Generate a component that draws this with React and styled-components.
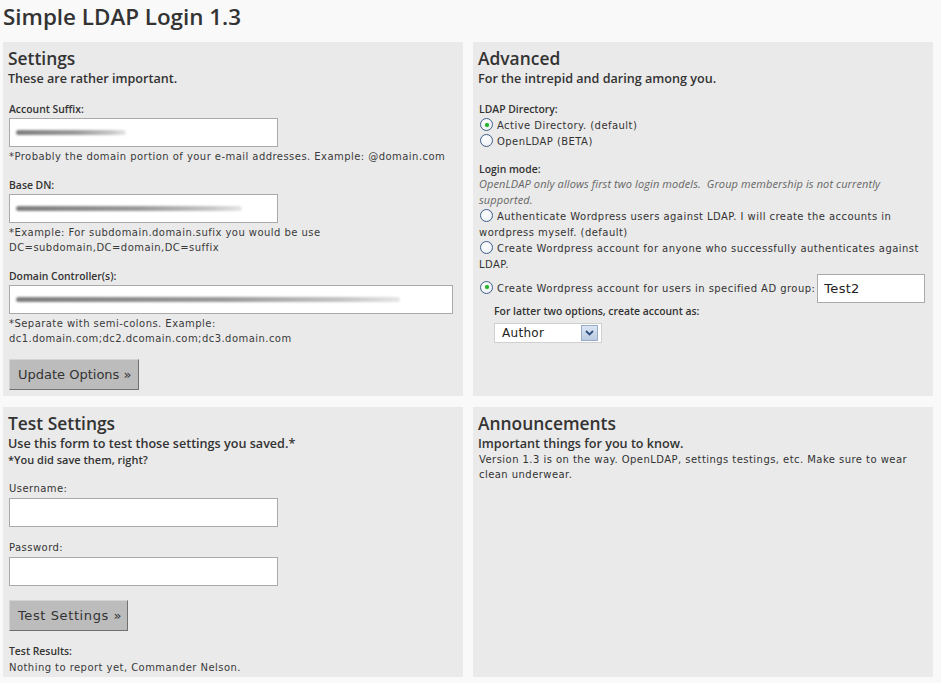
import React from "react";
import styled, { createGlobalStyle } from "styled-components";

const GlobalStyle = createGlobalStyle`
  html, body {
    margin: 0;
    padding: 0;
    background: #f9f9f9;
  }
  body {
    font-family: "Open Sans", "Liberation Sans", sans-serif;
    color: #333;
  }
`;

const Page = styled.div`
  width: 941px;
  height: 683px;
  overflow: hidden;
  background: #f9f9f9;
`;

const Title = styled.h1`
  margin: 0;
  padding-left: 3px;
  font-size: 22.4px;
  font-weight: 600;
  line-height: 33px;
  color: #333;
`;

const Grid = styled.div`
  display: grid;
  grid-template-columns: 460px 460px;
  grid-template-rows: 354px 270px;
  column-gap: 10px;
  row-gap: 11px;
  margin: 9px 0 0 3px;
`;

const Panel = styled.section`
  background: #eaeaea;
  padding: 5px 6px 0 5px;
`;

const Heading = styled.h2`
  margin: 0;
  font-size: 17.4px;
  font-weight: 600;
  line-height: 22px;
  color: #333;
`;

const Lead = styled.p`
  margin: 2px 0 0;
  font-size: 12.6px;
  font-weight: 600;
  line-height: 16px;
  color: #333;
`;

const Note = styled.p`
  margin: 0;
  font-size: 11px;
  font-weight: 600;
  line-height: 16px;
`;

const Label = styled.div`
  margin-top: ${({ gap }) => gap ?? 14}px;
  padding-left: 1px;
  font-size: 10.4px;
  font-weight: 600;
  line-height: 14px;
  color: #333;
`;

// the Verdana-like, widely spaced face used for hints and options
const spaced = `
  font-family: "DejaVu Sans", Verdana, sans-serif;
  font-size: 10px;
  letter-spacing: 0.45px;
`;

const PlainLabel = styled.div`
  ${spaced}
  margin-top: ${({ gap }) => gap ?? 14}px;
  padding-left: 1px;
  line-height: 14px;
  color: #333;
`;

const Box = styled.div`
  box-sizing: border-box;
  margin: 2px 0 0 1px;
  width: ${({ w }) => w || 269}px;
  height: 29px;
  background: #fff;
  border: 1px solid #aaa;
  display: flex;
  align-items: center;
  padding-left: 6px;
`;

const Blur = styled.span`
  display: block;
  height: 5px;
  width: ${({ w }) => w}px;
  border-radius: 3px;
  background: linear-gradient(90deg, #7d7d7d, #9a9a9a 55%, #c4c4c4 85%, #e6e6e6);
  filter: blur(1.2px);
`;

const Hint = styled.p`
  ${spaced}
  margin: 2px 0 0 1px;
  line-height: 15.5px;
  color: #3a3a3a;
`;

const Body = styled.p`
  ${spaced}
  margin: 0 0 0 1px;
  line-height: 15px;
  color: #333;
`;

const Button = styled.button`
  display: block;
  box-sizing: border-box;
  margin: ${({ gap }) => gap}px 0 0 1px;
  width: ${({ w }) => w}px;
  height: 31px;
  padding: 0 0 0 8px;
  text-align: left;
  background: #bcbcbc;
  border: 1px solid;
  border-color: #d4d4d4 #707070 #707070 #d4d4d4;
  font-family: "DejaVu Sans", Verdana, sans-serif;
  font-size: 13px;
  letter-spacing: ${({ ls }) => ls}px;
  color: #333;
  cursor: pointer;
`;

const Choices = styled.div`
  ${spaced}
  margin-top: ${({ gap }) => gap || 0}px;
  padding-left: 1px;
  line-height: 16px;
  color: #333;
`;

const Choice = styled.label`
  display: block;
`;

const Radio = styled.span`
  display: inline-block;
  box-sizing: border-box;
  width: 13px;
  height: 13px;
  margin: 0 4px 0 1px;
  vertical-align: -2px;
  border-radius: 50%;
  border: 1px solid #3f5f86;
  background: radial-gradient(circle at 40% 35%, #fff, #e6ebf2);
  position: relative;
  &::after {
    content: "";
    display: ${({ checked }) => (checked ? "block" : "none")};
    position: absolute;
    left: 3.5px;
    top: 3.5px;
    width: 4px;
    height: 4px;
    border-radius: 50%;
    background: #29b12e;
    box-shadow: 0 0 1px #5fd15f;
  }
`;

const Italic = styled.p`
  margin: 0;
  padding-left: 1px;
  font-size: 11px;
  font-style: italic;
  letter-spacing: 0.1px;
  line-height: 16px;
  color: #666;
`;

const GroupRow = styled.div`
  display: flex;
  align-items: center;
  gap: 2px;
  margin-top: 1px;
`;

const GroupInput = styled.div`
  box-sizing: border-box;
  width: 108px;
  height: 29px;
  background: #fff;
  border: 1px solid #aaa;
  padding-left: 6px;
  display: flex;
  align-items: center;
  font-family: "DejaVu Sans", Verdana, sans-serif;
  font-size: 13px;
  letter-spacing: 0.3px;
  color: #222;
`;

const Indent = styled.div`
  padding-left: 15px;
`;

const Select = styled.div`
  box-sizing: border-box;
  margin: 5px 0 0 1px;
  width: 108px;
  height: 20px;
  background: #fff;
  border: 1px solid #d0d0d0;
  display: flex;
  align-items: center;
  justify-content: space-between;
  padding: 0 3px 0 7px;
  font-family: "DejaVu Sans", Verdana, sans-serif;
  font-size: 12px;
  letter-spacing: 0.3px;
  color: #222;
`;

const Arrow = styled.span`
  box-sizing: border-box;
  width: 17px;
  height: 16px;
  border: 1px solid #98acc8;
  background: linear-gradient(#dbe5f3, #bccbe2);
  display: flex;
  align-items: center;
  justify-content: center;
`;

const Field = ({ label, gap, w, blur, plain }) => {
  const L = plain ? PlainLabel : Label;
  return (
    <>
      <L gap={gap}>{label}</L>
      <Box w={w}>{blur ? <Blur w={blur} /> : null}</Box>
    </>
  );
};

export default function App() {
  return (
    <Page>
      <GlobalStyle />
      <Title>Simple LDAP Login 1.3</Title>
      <Grid>
        <Panel>
          <Heading>Settings</Heading>
          <Lead>These are rather important.</Lead>
          <Field label="Account Suffix:" gap={15} blur={110} />
          <Hint>*Probably the domain portion of your e-mail addresses. Example: @domain.com</Hint>
          <Field label="Base DN:" gap={13} blur={226} />
          <Hint>
            *Example: For subdomain.domain.sufix you would be use
            <br />
            DC=subdomain,DC=domain,DC=suffix
          </Hint>
          <Field label="Domain Controller(s):" gap={13} w={444} blur={384} />
          <Hint>
            *Separate with semi-colons. Example:
            <br />
            dc1.domain.com;dc2.dcomain.com;dc3.domain.com
          </Hint>
          <Button gap={12} w={130} ls={0}>
            Update Options »
          </Button>
        </Panel>

        <Panel>
          <Heading>Advanced</Heading>
          <Lead>For the intrepid and daring among you.</Lead>
          <Label gap={15}>LDAP Directory:</Label>
          <Choices gap={2}>
            <Choice>
              <Radio checked />
              Active Directory. (default)
            </Choice>
            <Choice>
              <Radio />
              OpenLDAP (BETA)
            </Choice>
          </Choices>
          <Label gap={12}>Login mode:</Label>
          <Italic>
            OpenLDAP only allows first two login models.&nbsp; Group membership is not currently
            supported.
          </Italic>
          <Choices gap={1}>
            <Choice>
              <Radio />
              Authenticate Wordpress users against LDAP. I will create the accounts in wordpress
              myself. (default)
            </Choice>
            <Choice>
              <Radio />
              Create Wordpress account for anyone who successfully authenticates against LDAP.
            </Choice>
            <GroupRow>
              <span>
                <Radio checked />
                Create Wordpress account for users in specified AD group:
              </span>
              <GroupInput>Test2</GroupInput>
            </GroupRow>
          </Choices>
          <Indent>
            <Label gap={1}>For latter two options, create account as:</Label>
            <Select>
              Author
              <Arrow>
                <svg width="9" height="6" viewBox="0 0 9 6">
                  <path d="M1 1l3.5 3.5L8 1" fill="none" stroke="#2d4f80" strokeWidth="1.8" />
                </svg>
              </Arrow>
            </Select>
          </Indent>
        </Panel>

        <Panel>
          <Heading>Test Settings</Heading>
          <Lead>Use this form to test those settings you saved.*</Lead>
          <Note>*You did save them, right?</Note>
          <Field label="Username:" plain gap={14} />
          <Field label="Password:" plain gap={14} />
          <Button gap={14} w={119} ls={0.6}>
            Test Settings »
          </Button>
          <Label gap={13}>Test Results:</Label>
          <Hint>Nothing to report yet, Commander Nelson.</Hint>
        </Panel>

        <Panel>
          <Heading>Announcements</Heading>
          <Lead>Important things for you to know.</Lead>
          <Body>
            Version 1.3 is on the way. OpenLDAP, settings testings, etc. Make sure to wear clean
            underwear.
          </Body>
        </Panel>
      </Grid>
    </Page>
  );
}
